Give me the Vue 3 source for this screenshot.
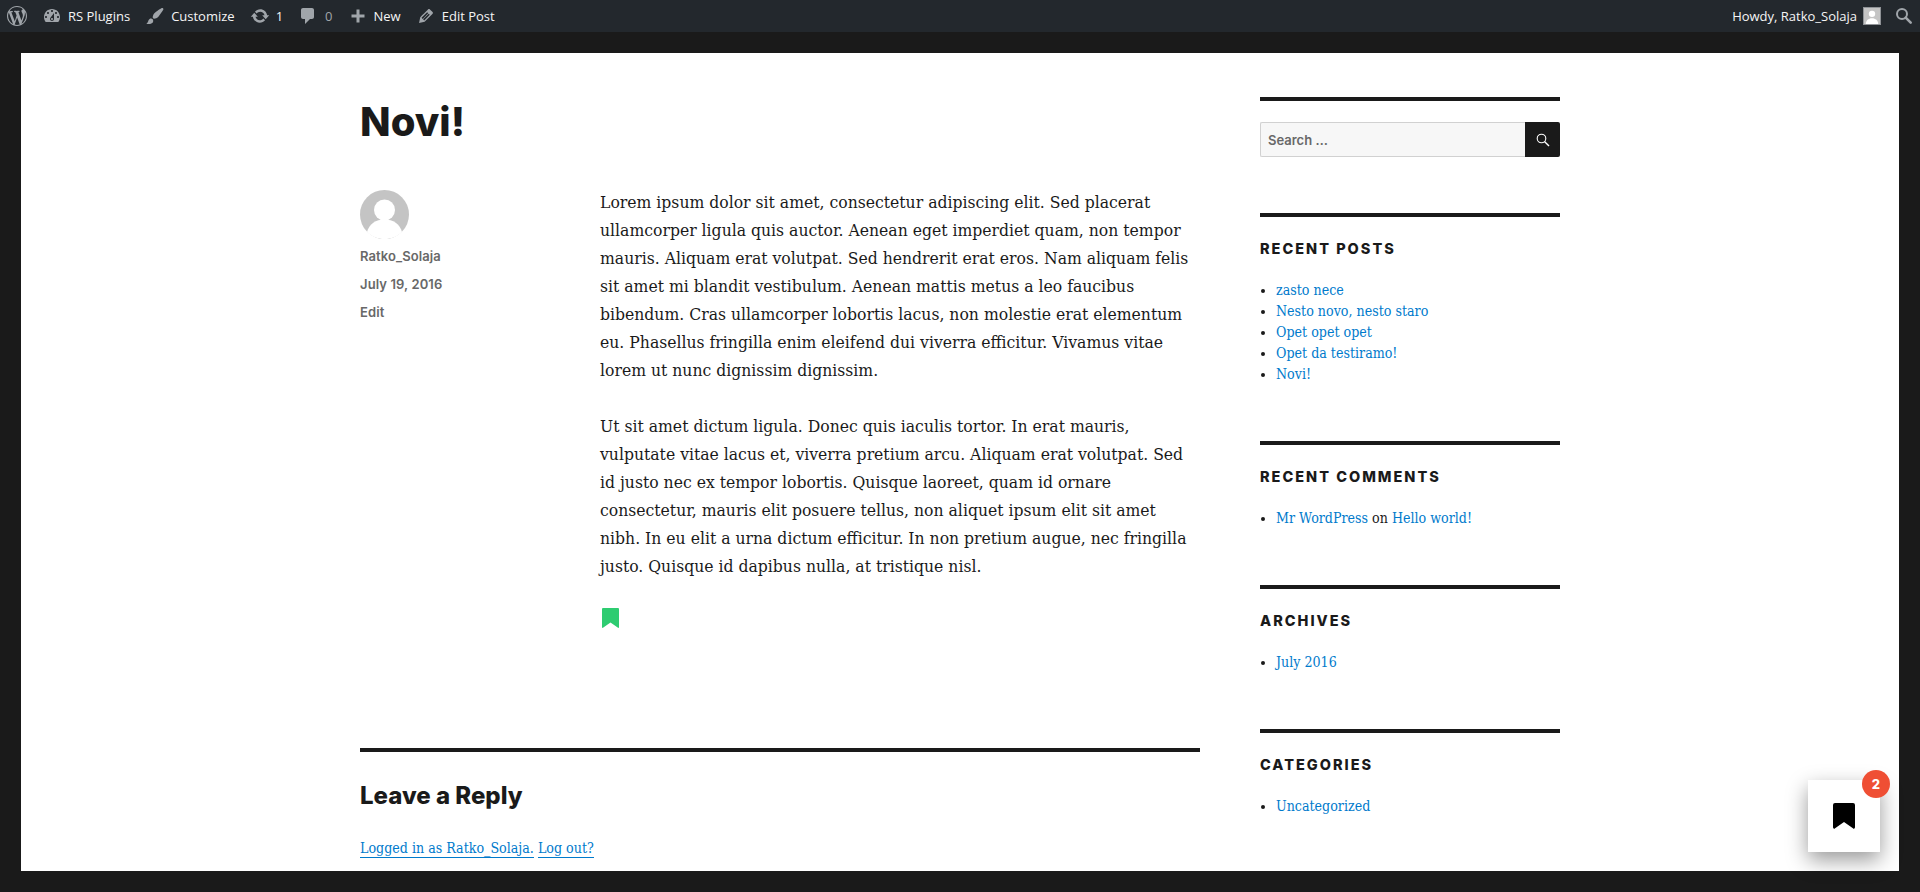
<template>
  <div class="page">
    <header class="admin-bar">
      <ul class="bar-group">
        <li class="bar-item logo">
          <svg class="icon icon-logo" viewBox="0 0 20 20"><path d="M20 10c0-5.51-4.49-10-10-10C4.48 0 0 4.49 0 10c0 5.52 4.48 10 10 10 5.51 0 10-4.48 10-10zM7.78 15.37L4.37 6.22c.55-.02 1.17-.08 1.17-.08.5-.06.44-1.13-.06-1.11 0 0-1.45.11-2.37.11-.18 0-.37 0-.58-.01C4.12 2.69 6.87 1.11 10 1.11c2.33 0 4.45.87 6.05 2.34-.68-.11-1.65.39-1.65 1.58 0 .74.45 1.36.9 2.1.35.61.55 1.36.55 2.46 0 1.49-1.4 5-1.4 5l-3.03-8.37c.54-.02.82-.17.82-.17.5-.05.44-1.25-.06-1.22 0 0-1.44.12-2.38.12-.87 0-2.33-.12-2.33-.12-.5-.03-.56 1.2-.06 1.22l.92.08 1.26 3.41zM17.41 10c.24-.64.74-1.87.43-4.25.7 1.29 1.05 2.71 1.05 4.25 0 3.29-1.73 6.24-4.4 7.78.97-2.59 1.94-5.2 2.92-7.78zM6.1 18.09C3.12 16.65 1.11 13.53 1.11 10c0-1.3.23-2.48.72-3.59C3.25 10.3 4.67 14.2 6.1 18.09zm4.03-6.63l2.58 6.98c-.86.29-1.76.45-2.71.45-.79 0-1.57-.11-2.29-.33.81-2.38 1.62-4.74 2.42-7.1z"/></svg>
        </li>
        <li class="bar-item">
          <svg class="icon" viewBox="0 0 20 20"><path fill-rule="evenodd" d="M3.76 16h12.48c1.1-1.37 1.76-3.11 1.76-5 0-4.42-3.58-8-8-8s-8 3.58-8 8c0 1.89.66 3.63 1.76 5zM10 4c.55 0 1 .45 1 1s-.45 1-1 1-1-.45-1-1 .45-1 1-1zM6 6c.55 0 1 .45 1 1s-.45 1-1 1-1-.45-1-1 .45-1 1-1zm8 0c.55 0 1 .45 1 1s-.45 1-1 1-1-.45-1-1 .45-1 1-1zm-5.37 5.55L12 7v6c0 1.1-.9 2-2 2s-2-.9-2-2c0-.57.24-1.08.63-1.45zM4 10c.55 0 1 .45 1 1s-.45 1-1 1-1-.45-1-1 .45-1 1-1zm12 0c.55 0 1 .45 1 1s-.45 1-1 1-1-.45-1-1 .45-1 1-1zm-5 3c0-.55-.45-1-1-1s-1 .45-1 1 .45 1 1 1 1-.45 1-1z"/></svg>
          <span>RS Plugins</span>
        </li>
        <li class="bar-item">
          <svg class="icon" viewBox="0 0 20 20"><path d="M18.33 3.57s.27-.8-.31-1.36c-.53-.52-1.22-.24-1.22-.24-.61.3-5.76 3.47-7.67 5.57-.86.96-2.06 3.79-1.09 4.82.92.98 3.96-.17 4.79-1 2.06-2.06 5.21-7.17 5.5-7.79zM1.4 17.65c2.37-1.56 1.46-3.41 3.23-4.64.93-.65 2.22-.62 3.08.29.63.67.8 2.57-.16 3.46-1.57 1.45-4 1.55-6.15.89z"/></svg>
          <span>Customize</span>
        </li>
        <li class="bar-item">
          <svg class="icon" viewBox="0 0 20 20"><path d="M10.2 3.28c3.53 0 6.43 2.61 6.92 6h2.08l-3.5 4-3.5-4h2.32c-.45-1.97-2.21-3.45-4.32-3.45-1.45 0-2.73.71-3.54 1.78L4.95 5.66C6.23 4.2 8.11 3.28 10.2 3.28zm-.4 13.44c-3.52 0-6.43-2.61-6.92-6H.8l3.5-4c1.17 1.33 2.33 2.67 3.5 4H5.48c.45 1.97 2.21 3.45 4.32 3.45 1.45 0 2.73-.71 3.54-1.78l1.71 1.95c-1.28 1.46-3.15 2.38-5.25 2.38z"/></svg>
          <span>1</span>
        </li>
        <li class="bar-item muted">
          <svg class="icon" viewBox="0 0 20 20"><path d="M5 2h9c1.1 0 2 .9 2 2v7c0 1.1-.9 2-2 2h-2l-5 5v-5H5c-1.1 0-2-.9-2-2V4c0-1.1.9-2 2-2z"/></svg>
          <span>0</span>
        </li>
        <li class="bar-item">
          <svg class="icon" viewBox="0 0 20 20"><path d="M17 7v3h-5v5H9v-5H4V7h5V2h3v5h5z" transform="translate(-.5 1.5)"/></svg>
          <span>New</span>
        </li>
        <li class="bar-item">
          <svg class="icon" viewBox="0 0 20 20"><path d="M13.89 3.39l2.71 2.72c.46.46.42 1.24.03 1.64l-8.01 8.02-5.56 1.16 1.16-5.58s7.6-7.63 7.99-8.03c.39-.39 1.22-.39 1.68.07zm-2.73 2.79l-5.59 5.61 1.11 1.11 5.54-5.65zm-2.97 8.23l5.58-5.6-1.07-1.08-5.59 5.6z"/></svg>
          <span>Edit Post</span>
        </li>
      </ul>
      <ul class="bar-group">
        <li class="bar-item howdy">
          <span>Howdy, Ratko_Solaja</span>
          <svg class="bar-avatar" viewBox="0 0 18 18">
            <rect width="18" height="18" fill="#c4c4c4"/>
            <circle cx="9" cy="6.6" r="3.6" fill="#fff"/>
            <path d="M2 18c0-4 3-6.5 7-6.5s7 2.500 7 6.500z" fill="#fff"/>
          </svg>
        </li>
        <li class="bar-item bar-search">
          <svg class="icon" viewBox="0 0 20 20"><circle cx="8" cy="8" r="5" fill="none" stroke="currentColor" stroke-width="2"/><path d="M11.700 11.700l5 5" stroke="currentColor" stroke-width="2.600" stroke-linecap="round"/></svg>
        </li>
      </ul>
    </header>

    <div class="site">
      <div class="site-inner">
        <main class="content">
          <h1 class="post-title">Novi!</h1>
          <div class="post">
            <aside class="post-meta">
              <svg class="avatar" viewBox="0 0 49 49">
                <circle cx="24.500" cy="24.500" r="24.500" fill="#c4c4c4"/>
                <circle cx="24.500" cy="20" r="10.500" fill="#fff"/>
                <path d="M7 42c2-8 9-12.500 17.500-12.500S40 34 42 42c-4.500 4.400-11 7-17.500 7S11.500 46.400 7 42z" fill="#fff"/>
              </svg>
              <a class="meta-link">Ratko_Solaja</a>
              <a class="meta-link">July 19, 2016</a>
              <a class="meta-link">Edit</a>
            </aside>
            <div class="post-body">
              <p v-for="(para, i) in paragraphs" :key="i">
                <span v-for="line in para" :key="line" class="line">{{ line }}</span>
              </p>
              <svg class="saved-mark" viewBox="0 0 17 20"><path d="M1 0h15a1 1 0 0 1 1 1v18.500l-.6.400L8.500 14.500.6 19.900l-.6-.400V1a1 1 0 0 1 1-1z"/></svg>
            </div>
          </div>
          <section class="reply">
            <h2 class="reply-title">Leave a Reply</h2>
            <p class="logged-in"><a>Logged in as Ratko_Solaja.</a> <a>Log out?</a></p>
          </section>
        </main>

        <aside class="sidebar">
          <section class="widget widget-search">
            <form class="search-form" @submit.prevent>
              <input class="search-input" type="text" placeholder="Search …" />
              <button class="search-button" type="submit">
                <svg viewBox="0 0 16 16"><circle cx="6.500" cy="6.500" r="4.300" fill="none" stroke="#fff" stroke-width="1.100"/><path d="M9.700 9.700l4.300 4.300" stroke="#fff" stroke-width="1.400"/></svg>
              </button>
            </form>
          </section>
          <section class="widget">
            <h2 class="widget-title">Recent Posts</h2>
            <ul class="widget-list">
              <li v-for="post in recentPosts" :key="post"><a>{{ post }}</a></li>
            </ul>
          </section>
          <section class="widget">
            <h2 class="widget-title">Recent Comments</h2>
            <ul class="widget-list">
              <li><a>Mr WordPress</a> on <a>Hello world!</a></li>
            </ul>
          </section>
          <section class="widget">
            <h2 class="widget-title">Archives</h2>
            <ul class="widget-list">
              <li><a>July 2016</a></li>
            </ul>
          </section>
          <section class="widget">
            <h2 class="widget-title">Categories</h2>
            <ul class="widget-list">
              <li><a>Uncategorized</a></li>
            </ul>
          </section>
        </aside>
      </div>
    </div>

    <button class="saved-button" type="button">
      <svg viewBox="0 0 22 26"><path d="M2 0h18a2 2 0 0 1 2 2v22.500l-1 1.500-10-7-10 7-1-1.500V2a2 2 0 0 1 2-2z"/></svg>
      <span class="saved-count">2</span>
    </button>
  </div>
</template>

<script setup>
const paragraphs = [
  [
    'Lorem ipsum dolor sit amet, consectetur adipiscing elit. Sed placerat',
    'ullamcorper ligula quis auctor. Aenean eget imperdiet quam, non tempor',
    'mauris. Aliquam erat volutpat. Sed hendrerit erat eros. Nam aliquam felis',
    'sit amet mi blandit vestibulum. Aenean mattis metus a leo faucibus',
    'bibendum. Cras ullamcorper lobortis lacus, non molestie erat elementum',
    'eu. Phasellus fringilla enim eleifend dui viverra efficitur. Vivamus vitae',
    'lorem ut nunc dignissim dignissim.'
  ],
  [
    'Ut sit amet dictum ligula. Donec quis iaculis tortor. In erat mauris,',
    'vulputate vitae lacus et, viverra pretium arcu. Aliquam erat volutpat. Sed',
    'id justo nec ex tempor lobortis. Quisque laoreet, quam id ornare',
    'consectetur, mauris elit posuere tellus, non aliquet ipsum elit sit amet',
    'nibh. In eu elit a urna dictum efficitur. In non pretium augue, nec fringilla',
    'justo. Quisque id dapibus nulla, at tristique nisl.'
  ]
]

const recentPosts = ['zasto nece', 'Nesto novo, nesto staro', 'Opet opet opet', 'Opet da testiramo!', 'Novi!']
</script>

<style>
html, body {
  margin: 0;
  height: 100%;
  overflow: hidden;
  background: #1a1a1a;
}
</style>

<style scoped>
.page {
  height: 892px;
  overflow: hidden;
  background: #1a1a1a;
  font-family: "DejaVu Serif Condensed", "Liberation Serif", serif;
}

/* admin bar */
.admin-bar {
  height: 32px;
  background: #23282d;
  display: flex;
  justify-content: space-between;
  padding: 0 6px 0 7px;
  font-family: "Open Sans", sans-serif;
  font-size: 13px;
  color: #f5f5f5;
}

.bar-group {
  display: flex;
  list-style: none;
  margin: 0;
  padding: 0;
}

.bar-item {
  display: flex;
  align-items: center;
  gap: 6px;
  padding-right: 15px;
  white-space: nowrap;
}

.icon {
  width: 20px;
  height: 20px;
  fill: #a0a5aa;
  color: #a0a5aa;
}

.muted span {
  color: #a0a5aa;
  margin-left: 1px;
}

.howdy {
  padding-right: 13px;
}

.bar-avatar {
  width: 18px;
  height: 18px;
  border: 1px solid #8f9296;
  box-sizing: border-box;
}

.bar-search {
  padding-right: 0;
}

/* page frame */
.site {
  margin: 21px 21px 0;
  height: 818px;
  overflow: hidden;
  background: #fff;
  color: #1a1a1a;
}

.site-inner {
  display: grid;
  grid-template-columns: 840px 300px;
  column-gap: 60px;
  padding: 44px 0 0 339px;
}

/* post */
.post-title {
  margin: 0;
  font-family: Inter, sans-serif;
  font-size: 40px;
  line-height: 50px;
  font-weight: 800;
}

.post {
  display: grid;
  grid-template-columns: 240px 600px;
  margin-top: 41px;
}

.post-meta {
  display: flex;
  flex-direction: column;
  align-items: flex-start;
  padding-top: 2px;
  font-family: Inter, sans-serif;
  font-size: 13px;
  font-weight: 600;
  line-height: 28px;
  letter-spacing: 0.1px;
  color: #686868;
}

.avatar {
  width: 49px;
  height: 49px;
  margin-bottom: 3px;
}

.post-body {
  font-size: 17.4px;
  line-height: 28px;
}

.post-body p {
  margin: 0 0 28px;
}

.line {
  display: block;
  white-space: nowrap;
}

.saved-mark {
  display: block;
  width: 17px;
  height: 20px;
  margin-left: 2px;
  fill: #2ecc71;
}

.reply {
  margin-top: 120px;
  border-top: 4px solid #1a1a1a;
}

.reply-title {
  margin: 28px 0 0;
  font-family: Inter, sans-serif;
  font-size: 24px;
  font-weight: 800;
  line-height: 32px;
}

.logged-in {
  margin: 22px 0 0;
  font-size: 14.1px;
  line-height: 28px;
  color: #1a1a1a;
}

.logged-in a {
  color: #007acc;
  padding-bottom: 1px;
  border-bottom: 1px solid #007acc;
}

/* sidebar */
.widget {
  border-top: 4px solid #1a1a1a;
  padding-top: 21px;
  margin-bottom: 56px;
}

.search-form {
  display: flex;
  height: 35px;
}

.search-input {
  flex: 1;
  min-width: 0;
  box-sizing: border-box;
  padding: 0 7px;
  background: #f7f7f7;
  border: 1px solid #d1d1d1;
  border-right: 0;
  border-radius: 2px 0 0 2px;
  font-family: Inter, sans-serif;
  font-size: 13px;
  font-weight: 600;
  color: #686868;
}

.search-input::placeholder {
  color: #686868;
  opacity: 1;
}

.search-button {
  width: 35px;
  padding: 0;
  border: 0;
  background: #1a1a1a;
  border-radius: 0 2px 2px 0;
  display: flex;
  align-items: center;
  justify-content: center;
}

.search-button svg {
  width: 16px;
  height: 16px;
}

.widget-title {
  margin: 0 0 21px;
  font-family: Inter, sans-serif;
  font-size: 14.5px;
  font-weight: 800;
  line-height: 21px;
  letter-spacing: 2px;
  text-transform: uppercase;
}

.widget-list {
  margin: 0;
  padding: 0 0 0 16px;
  font-size: 14.1px;
  line-height: 21px;
  white-space: nowrap;
}

.widget-list a {
  color: #007acc;
}

/* floating saved button */
.saved-button {
  position: fixed;
  left: 1808px;
  top: 780px;
  width: 72px;
  height: 72px;
  padding: 0;
  border: 0;
  background: #fff;
  box-shadow: 0 8px 20px rgba(0, 0, 0, 0.4);
  display: flex;
  align-items: center;
  justify-content: center;
}

.saved-button svg {
  width: 22px;
  height: 26px;
  fill: #000;
}

.saved-count {
  position: absolute;
  top: -10px;
  right: -10px;
  width: 28px;
  height: 28px;
  border-radius: 50%;
  background: #ef4f34;
  color: #fff;
  font-family: Inter, sans-serif;
  font-size: 13px;
  font-weight: 800;
  line-height: 28px;
  text-align: center;
}
</style>
